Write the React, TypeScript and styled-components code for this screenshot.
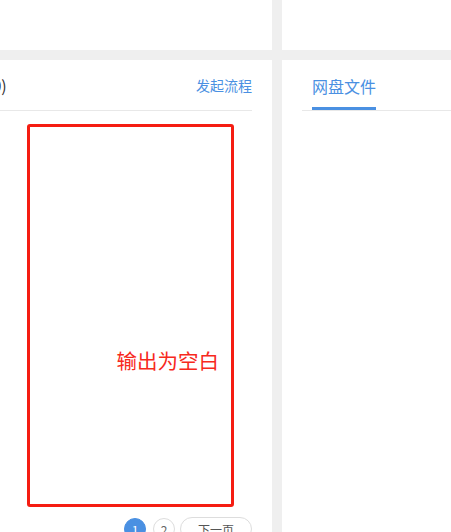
import React from "react";
import styled, { createGlobalStyle } from "styled-components";

const Global = createGlobalStyle`
  html, body { margin: 0; padding: 0; }
  body {
    background: #efefef;
    overflow: hidden;
    font-family: "Noto Sans CJK SC", "Noto Sans", sans-serif;
  }
`;

const Page = styled.div`
  display: grid;
  grid-template-columns: 272px 320px;
  grid-template-rows: 50px 472px;
  gap: 10px;
  height: 532px;
  width: 451px;
  overflow: hidden;
`;

const Panel = styled.section`
  background: #ffffff;
  min-width: 0;
`;

const Header = styled.div<{ $inset?: boolean }>`
  height: 50px;
  display: flex;
  align-items: center;
  justify-content: space-between;
  border-bottom: 1px solid #e8e8e8;
  margin: ${(p) => (p.$inset ? "0 0 0 20px" : "0 20px 0 0")};
`;

const Title = styled.span`
  font-size: 16px;
  color: #333;
  white-space: nowrap;
  margin-left: -77px;
`;

const LinkText = styled.a`
  font-size: 14px;
  color: #4a90e2;
  text-decoration: none;
  cursor: pointer;
`;

const Tab = styled.div`
  height: 50px;
  box-sizing: border-box;
  margin-left: 10px;
  padding-top: 4px;
  display: flex;
  align-items: center;
  font-size: 16px;
  color: #4a90e2;
  border-bottom: 3px solid #4a90e2;
`;

const Body = styled.div`
  padding: 13px 20px 0 27px;
`;

const EmptyBox = styled.div`
  width: 207px;
  height: 383px;
  box-sizing: border-box;
  border: 3px solid #f51d12;
  border-radius: 3px;
  display: flex;
  justify-content: flex-end;
  padding: 220px 12px 0 0;
`;

const EmptyText = styled.span`
  font-size: 20.5px;
  color: #f7291d;
  line-height: 26px;
  white-space: nowrap;
`;

const Pager = styled.div`
  margin-top: 10px;
  display: flex;
  justify-content: flex-end;
  align-items: center;
  gap: 7px;
`;

const PageDot = styled.span<{ $active?: boolean }>`
  width: 22px;
  height: 22px;
  box-sizing: border-box;
  border-radius: 50%;
  display: flex;
  align-items: center;
  justify-content: center;
  font-size: 12px;
  color: ${(p) => (p.$active ? "#fff" : "#666")};
  background: ${(p) => (p.$active ? "#4a90e2" : "#fff")};
  border: 1px solid ${(p) => (p.$active ? "#4a90e2" : "#ddd")};
`;

const NextBtn = styled.span`
  height: 24px;
  width: 72px;
  box-sizing: border-box;
  border-radius: 12px;
  border: 1px solid #ddd;
  display: flex;
  align-items: center;
  justify-content: center;
  font-size: 12px;
  color: #555;
  margin-left: -2px;
`;

export default function App() {
  return (
    <>
      <Global />
      <Page>
        <Panel />
        <Panel />
        <Panel>
          <Header>
            <Title>待办流程(0)</Title>
            <LinkText>发起流程</LinkText>
          </Header>
          <Body>
            <EmptyBox>
              <EmptyText>输出为空白</EmptyText>
            </EmptyBox>
            <Pager>
              <PageDot $active>1</PageDot>
              <PageDot>2</PageDot>
              <NextBtn>下一页</NextBtn>
            </Pager>
          </Body>
        </Panel>
        <Panel>
          <Header $inset>
            <Tab>网盘文件</Tab>
          </Header>
        </Panel>
      </Page>
    </>
  );
}
